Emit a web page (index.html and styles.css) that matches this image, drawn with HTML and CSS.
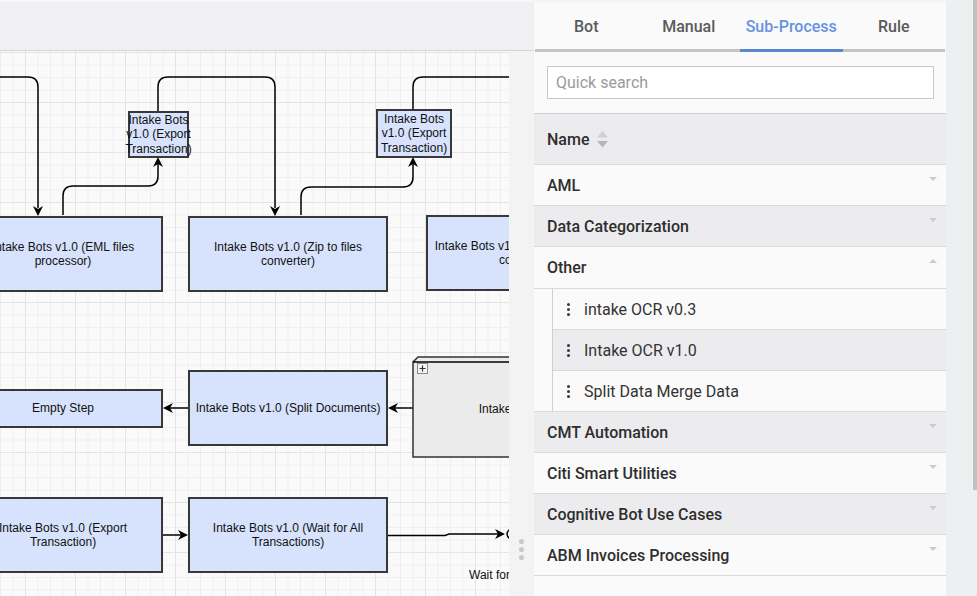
FILE: index.html
```html
<!DOCTYPE html>
<html lang="en">
<head>
  <meta charset="UTF-8" />
  <meta name="viewport" content="width=device-width, initial-scale=1.0"/>
  <title>Process Designer</title>
  <link rel="stylesheet" href="styles.css">
</head>
<body>

  <div class="app">

    <main class="workspace">
      <div class="toolbar"></div>

      <div class="stage">
        <div class="canvas">
          <!-- connectors, drawn in page coordinates -->
          <svg class="edges" width="509" height="545" viewBox="0 51 509 545">
            <g class="wire">
              <path d="M-2 77 H28 Q38 77 38 87 V208"/>
              <path d="M63 215 V196 Q63 186 73 186 H148 Q158 186 158 176 V164"/>
              <path d="M158 111 V87 Q158 77 168 77 H265 Q275 77 275 87 V208"/>
              <path d="M301 215 V197 Q301 187 311 187 H403 Q413 187 413 177 V164"/>
              <path d="M413 109 V87 Q413 77 423 77 H512"/>
              <path d="M188 408 H170"/>
              <path d="M413 408 H395"/>
              <path d="M163 535 H181"/>
              <path d="M388 535.5 H445 L449 534 H500"/>
              <path d="M510 529 Q504 534 510 539"/>
            </g>
            <g class="head">
              <path d="M38 216 l-5 -10 l5 3 l5 -3 z"/>
              <path d="M158 157 l-5 10 l5 -3 l5 3 z"/>
              <path d="M275 216 l-5 -10 l5 3 l5 -3 z"/>
              <path d="M413 157 l-5 10 l5 -3 l5 3 z"/>
              <path d="M163 408 l10 -5 l-3 5 l3 5 z"/>
              <path d="M388 408 l10 -5 l-3 5 l3 5 z"/>
              <path d="M188 535 l-10 -5 l3 5 l-3 5 z"/>
              <path d="M505 534 l-10 -5 l3 5 l-3 5 z"/>
            </g>
            <!-- collapsed sub-process box -->
            <path class="box3d" d="M413 362 L418 357 H530 V457 H413 Z"/>
            <path class="wire" d="M413 362 H530"/>
            <rect class="toggle" x="417.5" y="363.5" width="10" height="10"/>
            <path class="toggle-plus" d="M419.5 368.5 H425.5 M422.5 365.5 V371.5"/>
          </svg>

          <div class="node n-eml">Intake Bots v1.0 (EML files<br>processor)</div>
          <div class="node n-zip">Intake Bots v1.0 (Zip to files<br>converter)</div>
          <div class="node n-csv">Intake Bots v1.0 (Excel to CSV file<br>converter)</div>
          <div class="node n-exp1">Intake Bots<br>v1.0 (Export<br>Transaction)</div>
          <div class="node n-exp2">Intake Bots<br>v1.0 (Export<br>Transaction)</div>

          <div class="node n-empty">Empty Step</div>
          <div class="node n-split">Intake Bots v1.0 (Split Documents)</div>
          <div class="node plain n-sub">Intake OCR v1.0</div>

          <div class="node n-exp3">Intake Bots v1.0 (Export<br>Transaction)</div>
          <div class="node n-wait">Intake Bots v1.0 (Wait for All<br>Transactions)</div>
          <div class="node plain n-waitlbl">Wait for All</div>
        </div>

        <div class="splitter"><span class="grip"></span></div>
      </div>
    </main>

    <aside class="panel">
      <nav class="tabs">
        <a class="tab">Bot</a>
        <a class="tab">Manual</a>
        <a class="tab active">Sub-Process</a>
        <a class="tab">Rule</a>
      </nav>

      <div class="search">
        <input type="text" placeholder="Quick search">
      </div>

      <div class="tree">
        <div class="tree-head">
          Name
          <svg class="sort" width="11" height="17" viewBox="0 0 11 17">
            <path d="M5.5 0 L11 6.5 H0 Z" fill="#cfd1d4"/>
            <path d="M5.5 16.5 L11 10 H0 Z" fill="#b3b5b9"/>
          </svg>
        </div>

        <div class="groups">
          <div class="group"><div class="group-title">AML</div></div>
          <div class="group"><div class="group-title">Data Categorization</div></div>
          <div class="group open">
            <div class="group-title">Other</div>
            <ul class="items">
              <li class="item"><span class="kebab"></span>intake OCR v0.3</li>
              <li class="item"><span class="kebab"></span>Intake OCR v1.0</li>
              <li class="item"><span class="kebab"></span>Split Data Merge Data</li>
            </ul>
          </div>
          <div class="group"><div class="group-title">CMT Automation</div></div>
          <div class="group"><div class="group-title">Citi Smart Utilities</div></div>
          <div class="group"><div class="group-title">Cognitive Bot Use Cases</div></div>
          <div class="group"><div class="group-title">ABM Invoices Processing</div></div>
        </div>
      </div>
    </aside>

    <div class="gutter"><div class="thumb"></div></div>

  </div>

</body>
</html>
```

FILE: styles.css
```css
* {
  margin: 0;
  padding: 0;
  box-sizing: border-box;
}
body {
  background: #eeeff1;
  font-family: Roboto, "Noto Sans", sans-serif;
  color: #333;
  overflow: hidden;
}
.app {
  display: flex;
  height: 596px;
}

/* left side: toolbar + diagram */
.workspace {
  width: 534px;
  display: flex;
  flex-direction: column;
  border-top: 2px solid #f7f7f8;
}
.toolbar {
  height: 49px;
  background: #f0f0f2;
  border-bottom: 1px solid #d4d4d6;
}
.stage {
  flex: 1;
  display: flex;
  min-height: 0;
}
.canvas {
  position: relative;
  width: 509px;
  overflow: hidden;
  background-color: #fafafa;
  background-image:
    linear-gradient(to right, #e4e4e4 1px, transparent 1px),
    linear-gradient(to bottom, #e4e4e4 1px, transparent 1px),
    linear-gradient(to right, #efefef 1px, transparent 1px),
    linear-gradient(to bottom, #efefef 1px, transparent 1px);
  background-size: 50px 50px, 50px 50px, 12.5px 12.5px, 12.5px 12.5px;
  background-position: 25px 0, 0 1px, 0 0, 0 1px;
}
.edges {
  position: absolute;
  left: 0;
  top: 0;
}
.wire {
  fill: none;
  stroke: #000;
  stroke-width: 1.5;
}
.head {
  fill: #000;
}
.box3d {
  fill: #ebebeb;
  stroke: #333;
  stroke-width: 1.5;
}
.toggle {
  fill: #f4f4f4;
  stroke: #8a8a8a;
}
.toggle-plus {
  stroke: #333;
  stroke-width: 1.2;
}
.node {
  position: absolute;
  display: flex;
  align-items: center;
  justify-content: center;
  text-align: center;
  white-space: nowrap;
  background: #d7e3fc;
  border: 2px solid #383838;
  font-family: "Liberation Sans", Arial, sans-serif;
  font-size: 12px;
  line-height: 14.5px;
  color: #111;
}
.node.plain {
  background: none;
  border: none;
}
.n-eml   { left: -37px; top: 165px; width: 200px; height: 76px; }
.n-zip   { left: 188px; top: 165px; width: 200px; height: 76px; }
.n-csv   { left: 426px; top: 164px; width: 200px; height: 76px; }
.n-exp1  { left: 128px; top: 60px;  width: 61px;  height: 47px; }
.n-exp2  { left: 376px; top: 58px;  width: 76px;  height: 49px; }
.n-empty { left: -37px; top: 338px; width: 200px; height: 39px; }
.n-split { left: 188px; top: 319px; width: 200px; height: 76px; }
.n-sub   { left: 413px; top: 311px; width: 220px; height: 95px; }
.n-exp3  { left: -37px; top: 446px; width: 200px; height: 76px; }
.n-wait  { left: 188px; top: 446px; width: 200px; height: 76px; }
.n-waitlbl { left: 469px; top: 517px; justify-content: flex-start; }

.splitter {
  width: 25px;
  background: #f3f3f4;
  display: flex;
  justify-content: center;
  padding-top: 488px;
}
.grip {
  width: 5px;
  height: 5px;
  border-radius: 50%;
  background: #c9c9cb;
  box-shadow: 0 8px 0 #c9c9cb, 0 16px 0 #c9c9cb;
}

/* right side: palette */
.panel {
  width: 412px;
  background: #fafafa;
  border-top: 2px solid #f4f4f5;
}
.tabs {
  display: flex;
  height: 50px;
  padding: 0 1px;
}
.tab {
  flex: 1;
  text-align: center;
  padding-top: 3px;
  line-height: 44px;
  font-size: 16px;
  font-weight: 500;
  color: #5a5a5a;
  border-bottom: 3px solid #c4c4c4;
  cursor: pointer;
}
.tab.active {
  color: #6592e0;
  border-bottom-color: #5b87d0;
}
.search {
  padding: 14px 12px 14px 13px;
}
.search input {
  display: block;
  width: 100%;
  height: 33px;
  border: 1px solid #c8c8c8;
  background: #fff;
  padding: 0 8px;
  font-family: Roboto, sans-serif;
  font-size: 16px;
  color: #333;
  outline: none;
}
.search input::placeholder {
  color: #9b9b9b;
}
.tree {
  border-top: 1px solid #d0d0d2;
}
.tree-head {
  height: 51px;
  display: flex;
  align-items: center;
  padding-left: 13px;
  background: #ececee;
  border-bottom: 1px solid #d9d9db;
  font-size: 16px;
  font-weight: 500;
  color: #2e2e2e;
}
.sort {
  margin-left: 8px;
}
.group {
  background: #fafafa;
}
.group-title {
  position: relative;
  height: 41px;
  display: flex;
  align-items: center;
  padding-left: 13px;
  border-bottom: 1px solid #d9d9db;
  font-size: 16px;
  font-weight: 500;
  color: #2e2e2e;
}
.group:nth-child(even) .group-title {
  background: #ececee;
}
.group-title::after {
  content: "";
  position: absolute;
  right: 9px;
  top: 12px;
  border-left: 4.5px solid transparent;
  border-right: 4.5px solid transparent;
  border-top: 4px solid #c8ccd2;
}
.group.open .group-title {
  height: 42px;
}
.group.open .group-title::after {
  border-top: none;
  border-bottom: 4px solid #c8ccd2;
}
.group.open {
  border-bottom: 1px solid #d9d9db;
}
.items {
  list-style: none;
  margin-left: 18px;
  border-left: 1px solid #d0d0d2;
}
.item {
  height: 41px;
  display: flex;
  align-items: center;
  padding-left: 14px;
  border-bottom: 1px solid #d9d9db;
  font-size: 16px;
  color: #333;
}
.item:nth-child(even) {
  background: #ececee;
}
.item:last-child {
  height: 40px;
  border-bottom: none;
}
.kebab {
  width: 3px;
  height: 3px;
  border-radius: 50%;
  background: #3a3a3a;
  box-shadow: 0 -5px 0 #3a3a3a, 0 5px 0 #3a3a3a;
  margin-right: 14px;
}

.gutter {
  flex: 1;
  display: flex;
  justify-content: flex-end;
  background: #eeeff1;
}
.thumb {
  width: 4px;
  height: 490px;
  background: #c1c1c1;
}
```
